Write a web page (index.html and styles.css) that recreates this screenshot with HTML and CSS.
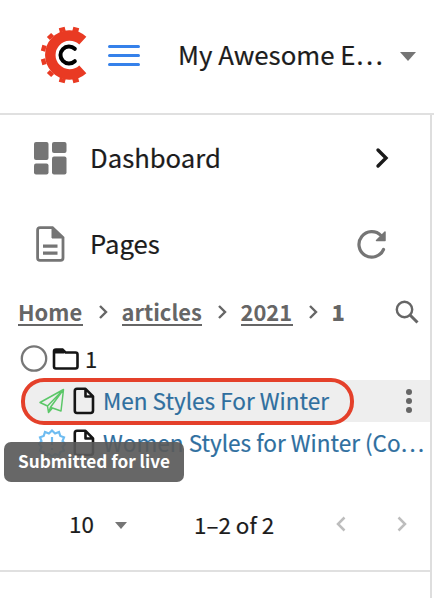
FILE: index.html
```html
<!DOCTYPE html>
<html lang="en">
<head>
<meta charset="utf-8">
<title>Dashboard</title>
<link rel="stylesheet" href="styles.css">
</head>
<body>
<header class="header">
  <svg class="logo" width="60" height="60" viewBox="-30 -30 60 60">
    <g stroke="#e93a23" fill="none">
      <path d="M13.8 -14.3A19.400 19.400 0 1 0 13.8 14.3" stroke-width="10.5"/>
      <path stroke-width="6" d="M6.2 -23.2L7.3 -27.4M-6.2 -23.2L-7.3 -27.4M-17 -17L-20 -20M-23.2 -6.2L-27.4 -7.3M-23.2 6.2L-27.4 7.3M-17 17L-20 20M-6.2 23.2L-7.3 27.4M6.2 23.2L7.3 27.4"/>
    </g>
    <path d="M5.8 -6.2A8.5 8.5 0 1 0 5.8 6.2" fill="none" stroke="#000" stroke-width="4" stroke-linecap="round"/>
  </svg>
  <svg class="menu" width="34" height="24" viewBox="0 0 34 24" fill="none" stroke="#3581ea" stroke-width="3" stroke-linecap="round"><path d="M2.500 3.500H31.500M2.500 12.500H31.500M2.500 21.500H31.500"/></svg>
  <span class="site">My Awesome E…</span>
  <span class="caret"></span>
</header>
<main class="sidebar">
  <div class="nav">
    <svg width="34" height="34" viewBox="0 0 34 34" fill="#757575"><rect x="1" y="1" width="14.5" height="18" rx="2"/><rect x="19" y="1" width="14.5" height="11" rx="2"/><rect x="1" y="22.500" width="14.500" height="11" rx="2"/><rect x="19" y="15.500" width="14.500" height="18" rx="2"/></svg>
    <span class="label">Dashboard</span>
    <svg class="end next" width="14" height="22" viewBox="0 0 14 22" fill="none" stroke="#1a1a1a" stroke-width="3.4" stroke-linecap="round"><path d="M3 3L11 11L3 19"/></svg>
  </div>
  <div class="nav">
    <svg width="34" height="38" viewBox="0 0 34 38" fill="none" stroke="#757575" stroke-width="2.800"><path d="M7 2.600H19.500L30 12.500V33Q30 35.400 27.500 35.400H7Q4.600 35.400 4.600 33V5Q4.600 2.600 7 2.600Z"/><path d="M19 3V13H29Z" fill="#757575" stroke-width="1"/><path d="M10 21.200H24.500M10 28.200H24.500" stroke-width="3.200"/></svg>
    <span class="label">Pages</span>
    <svg class="end refresh" width="32" height="32" viewBox="0 0 32 32" fill="none" stroke="#757575" stroke-width="3.200" stroke-linecap="round"><path d="M27.500 21.500A12.800 12.800 0 1 1 25 7.500"/><path d="M29 4V12.500H20.500Z" fill="#757575" stroke-width="1.500" stroke-linejoin="round"/></svg>
  </div>
  <nav class="crumbs">
    <a class="c-home">Home</a>
    <svg class="sep" viewBox="0 0 10 16"><path d="M2 2L8 8L2 14"/></svg>
    <a class="c-articles">articles</a>
    <svg class="sep" viewBox="0 0 10 16"><path d="M2 2L8 8L2 14"/></svg>
    <a class="c-year">2021</a>
    <svg class="sep" viewBox="0 0 10 16"><path d="M2 2L8 8L2 14"/></svg>
    <b class="current">1</b>
    <svg class="search" width="24" height="24" viewBox="0 0 24 24" fill="none" stroke="#666" stroke-width="2.400"><circle cx="9.500" cy="9.500" r="7.700"/><path d="M15 15L22.500 22.500" stroke-width="3"/></svg>
  </nav>
  <div class="row folder">
    <svg width="28" height="28" viewBox="0 0 28 28" fill="none" stroke="#777" stroke-width="2.300"><circle cx="14" cy="13.500" r="12.200"/></svg>
    <svg class="dir" width="28" height="24" viewBox="0 0 28 24" fill="none" stroke="#151515" stroke-width="2.600"><path d="M4 2.600H10.500L13.500 5.500H23.500Q25.500 5.500 25.500 7.500V19.500Q25.500 21.500 23.500 21.500H4Q2 21.500 2 19.500V4.500Q2 2.600 4 2.600Z"/><path d="M3 4H10L12 6H3Z" fill="#151515" stroke-width="1"/></svg>
    <span class="count">1</span>
  </div>
  <div class="row selected">
    <svg class="state" width="26" height="26" viewBox="0 0 26 26" fill="none" stroke="#5bc768" stroke-width="1.500" stroke-linejoin="round"><path d="M1 14.500L24.500 1.500L22 23L13.500 20L9.500 24.500L8.500 18ZM8.500 18L24.500 1.500L11.500 19.200L9.500 24.500M11.500 19.200L13.500 20"/></svg>
    <svg class="doc" width="22" height="28" viewBox="0 0 22 28"><path d="M4 1.800H12.500L20 9.300V23.500Q20 26 17.500 26H4Q1.800 26 1.800 23.500V4Q1.800 1.800 4 1.800ZM12.500 2V9.500H20"/></svg>
    <a class="title">Men Styles For Winter</a>
    <svg class="dots" width="8" height="26" viewBox="0 0 8 26" fill="#666"><circle cx="4" cy="4" r="3"/><circle cx="4" cy="13" r="3"/><circle cx="4" cy="22" r="3"/></svg>
    <span class="ring"></span>
  </div>
  <div class="row">
    <svg class="state badge" width="28" height="28" viewBox="0 0 28 28" fill="none" stroke="#6ebcf1" stroke-width="2.200"><path d="M14 1.500L17.100 4.500L21 3L22.300 7L26 8.300L24.500 12L27 15L24.500 18L26 21.700L22.300 23L21 26.500L17.100 25L14 27.500L10.900 25L7 26.500L5.700 23L2 21.700L3.500 18L1 15L3.500 12L2 8.300L5.700 7L7 3L10.900 4.500Z"/><path d="M14 8V16M14 19V21"/></svg>
    <svg class="doc" width="22" height="28" viewBox="0 0 22 28"><path d="M4 1.800H12.500L20 9.300V23.500Q20 26 17.500 26H4Q1.800 26 1.800 23.500V4Q1.800 1.800 4 1.800ZM12.500 2V9.500H20"/></svg>
    <a class="title">Women Styles for Winter (Co…</a>
    <span class="tooltip">Submitted for live</span>
  </div>
  <div class="pager">
    <span class="size">10</span><span class="caret small"></span>
    <span class="range">1–2 of 2</span>
    <svg class="page prev" width="10" height="16" viewBox="0 0 10 16"><path d="M8.500 1.500L2 8L8.500 14.500"/></svg>
    <svg class="page" width="10" height="16" viewBox="0 0 10 16"><path d="M1.500 1.500L8 8L1.500 14.500"/></svg>
  </div>
</main>
</body>
</html>
```
FILE: styles.css
```css
* { box-sizing: border-box; }
body { margin: 0; width: 434px; height: 598px; overflow: hidden; background: #fff; color: #1c1c1c; font-family: "Noto Sans CJK SC", "Noto Sans", sans-serif; white-space: nowrap; }
svg, span { flex: none; }
.header { height: 115px; border-bottom: 2px solid #e0e0e0; display: flex; align-items: center; padding: 0 0 3px 39px; }
.menu { margin-left: 8px; }
.site { font-size: 25.800px; margin-left: 37px; width: 222px; line-height: 40px; padding-bottom: 2px; -webkit-text-stroke: .2px; }
.caret { border: 8.500px solid transparent; border-top: 9px solid #757575; border-bottom: 0; position: relative; top: 1px; }
.sidebar { width: 432px; height: 483px; border-right: 2px solid #dedede; }
.nav { height: 86px; display: flex; align-items: center; padding-left: 33px; }
.label { font-size: 25.700px; margin-left: 23px; line-height: 40px; padding-bottom: 2px; -webkit-text-stroke: .2px; }
.end { margin-left: auto; }
.next { margin-right: 41px; }
.refresh { margin-right: 42px; }
.crumbs { height: 51px; display: flex; align-items: center; padding-left: 18px; font-size: 21.900px; font-weight: 700; color: #666; }
.crumbs a { line-height: 25px; height: 27px; border-bottom: 2px solid #666; }
.c-home { width: 64.500px; }
.c-articles { width: 80px; }
.c-year { width: 52px; }
.current { padding-bottom: 3px; }
.sep { width: 10px; height: 16px; margin: 0 14px 0 15px; fill: none; stroke: #666; stroke-width: 2.400; position: relative; top: -.5px; }
.search { margin-left: auto; margin-right: 11px; position: relative; top: -1px; }
.row { height: 42px; display: flex; align-items: center; position: relative; padding-left: 39px; }
.folder { padding-left: 20px; }
.dir { margin-left: 4px; }
.count { font-size: 22px; margin-left: 5px; padding-bottom: 2px; -webkit-text-stroke: .2px; }
.selected { background: linear-gradient(90deg, #fff 22px, transparent 22px), #eee; border-radius: 22px 0 0 22px; }
.state { width: 26px; }
.badge { width: 28px; margin: 0 -1px; }
.doc { margin-left: 8px; fill: none; stroke: #151515; stroke-width: 2.600; stroke-linejoin: round; }
.title { font-size: 22.550px; margin-left: 8px; color: #2f6f9f; line-height: 36px; padding-bottom: 2px; -webkit-text-stroke: .2px; }
.selected { background: none; }
.selected::before { content: ""; position: absolute; z-index: -1; inset: 0 0 0 22px; background: #eee; border-radius: 21px 0 0 21px; }
.dots { margin-left: auto; margin-right: 17px; }
.ring { position: absolute; left: 21px; top: -2px; width: 333px; height: 47px; border: 4px solid #e4402a; border-radius: 23px; }
.tooltip { position: absolute; left: 4px; top: 20px; width: 180px; height: 40px; border-radius: 7px; background: rgba(90,90,90,.92); color: #fff; font-size: 17.200px; font-weight: 700; line-height: 38px; text-align: center; }
.pager { height: 108px; border-bottom: 2px solid #e0e0e0; display: flex; align-items: center; padding: 14px 0 0 69px; font-size: 22.400px; -webkit-text-stroke: .2px; }
.size { width: 46px; padding-bottom: 2px; }
.small { border-width: 7px 6.500px 0; }
.range { margin-left: 67px; width: 142px; }
.page { fill: none; stroke: #bdbdbd; stroke-width: 2.500; }
.prev { margin-right: 51px; }
```
